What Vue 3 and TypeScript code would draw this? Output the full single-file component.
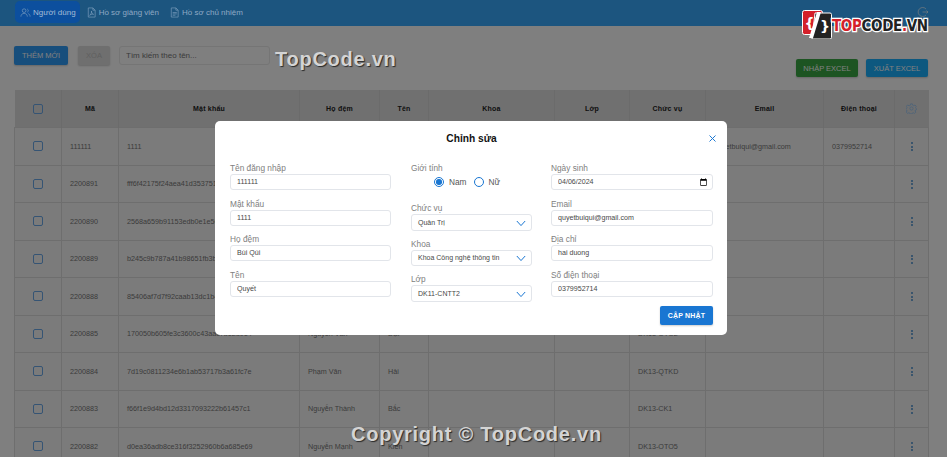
<script setup lang="ts">
interface Row {
  id: string
  pass: string
  last?: string
  first?: string
  cls?: string
  email?: string
  phone?: string
}

const rows: Row[] = [
  { id: '111111', pass: '1111', last: 'Bùi Qúi', first: 'Quyết', cls: 'DK11-CNTT2', email: 'quyetbuiqui@gmail.com', phone: '0379952714' },
  { id: '2200891', pass: 'fff6f42175f24aea41d3537519e1c0a2' },
  { id: '2200890', pass: '2568a659b91153edb0e1e5632ab9d0f4' },
  { id: '2200889', pass: 'b245c9b787a41b98651fb3b07dd1e6c3' },
  { id: '2200888', pass: '85406af7d7f92caab13dc1b4e08f7a15' },
  { id: '2200885', pass: '170050b605fe3c3600c43aac7be2d914', last: 'Nguyễn Văn', first: 'Đạt', cls: 'DK13-OTO2' },
  { id: '2200884', pass: '7d19c0811234e6b1ab53717b3a61fc7e', last: 'Phạm Văn', first: 'Hải', cls: 'DK13-QTKD' },
  { id: '2200883', pass: 'f66f1e9d4bd12d3317093222b61457c1', last: 'Nguyễn Thành', first: 'Bắc', cls: 'DK13-CK1' },
  { id: '2200882', pass: 'd0ea36adb8ce316f3252960b6a685e69', last: 'Nguyễn Mạnh', first: 'Kiên', cls: 'DK13-OTO5' }
]

const colWidths: number[] = [47, 57, 181, 80, 49, 126, 75, 76, 118, 71, 34]
</script>

<template>
  <div class="page">
    <header class="topbar">
      <nav class="tabs">
        <a class="tab active">
          <svg viewBox="0 0 24 24" class="tab-icon"><circle cx="9" cy="8" r="4" /><path d="M2 21c0-4.500 3-7 7-7s7 2.500 7 7M16 4.500a4 4 0 0 1 0 7M18 14.500c2.500.8 4 3 4 6.500" /></svg>
          Người dùng
        </a>
        <a class="tab">
          <svg viewBox="0 0 24 24" class="tab-icon"><path d="M5 2h10l5 5v15H5zM15 2v5h5" /><path d="M8 18c3-2 4.500-6 4-9-.5 3 2 6.500 4.500 7-3-.5-6 0-8.500 2z" /></svg>
          Hồ sơ giảng viên
        </a>
        <a class="tab">
          <svg viewBox="0 0 24 24" class="tab-icon"><path d="M5 2h10l5 5v15H5zM15 2v5h5M8 12h9M8 15h9M8 18h6" /></svg>
          Hồ sơ chủ nhiệm
        </a>
      </nav>
      <svg viewBox="0 0 24 24" class="logout"><path d="M18 6a9 9 0 1 0 0 12M11 12h11M19 9l3 3-3 3" /></svg>
    </header>

    <section class="toolbar">
      <div class="tool-left">
        <button class="btn primary">THÊM MỚI</button>
        <button class="btn disabled">XÓA</button>
        <input class="search" placeholder="Tìm kiếm theo tên..." />
      </div>
      <div class="tool-right">
        <button class="btn green">NHẬP EXCEL</button>
        <button class="btn teal">XUẤT EXCEL</button>
      </div>
    </section>

    <table class="grid">
      <colgroup>
        <col v-for="(w, i) in colWidths" :key="i" :style="{ width: w + 'px' }" />
      </colgroup>
      <thead>
        <tr>
          <th><span class="check"></span></th>
          <th>Mã</th>
          <th>Mật khẩu</th>
          <th>Họ đệm</th>
          <th>Tên</th>
          <th>Khoa</th>
          <th>Lớp</th>
          <th>Chức vụ</th>
          <th>Email</th>
          <th>Điện thoại</th>
          <th>
            <svg viewBox="0 0 24 24" class="gear"><circle cx="12" cy="12" r="3.500" /><path d="M10 2h4l.6 3 2.400 1 2.600-1.600 2.800 2.800L20.800 9.800l1 2.200 1.200.6v2l-2.200.6-1 2.200 1.600 2.600-2.800 2.800-2.600-1.600-2.400 1-.6 1.800h-4l-.6-1.800-2.400-1-2.600 1.600-2.800-2.800 1.600-2.600-1-2.200-2.200-.6v-2l2.200-.6 1-2.200-1.600-2.600 2.800-2.800L7 6l2.400-1z" /></svg>
          </th>
        </tr>
      </thead>
      <tbody>
        <tr v-for="row in rows" :key="row.id">
          <td class="center"><span class="check"></span></td>
          <td>{{ row.id }}</td>
          <td class="clip">{{ row.pass }}</td>
          <td>{{ row.last }}</td>
          <td>{{ row.first }}</td>
          <td></td>
          <td></td>
          <td>{{ row.cls }}</td>
          <td>{{ row.email }}</td>
          <td>{{ row.phone }}</td>
          <td class="center"><span class="dots"><i></i><i></i><i></i></span></td>
        </tr>
      </tbody>
    </table>

    <div class="overlay">
      <div class="modal">
        <div class="modal-head">
          <h2>Chỉnh sửa</h2>
          <svg viewBox="0 0 12 12" class="close"><path d="M2 2l8 8M10 2l-8 8" /></svg>
        </div>
        <form class="form" @submit.prevent>
          <div class="col col-a">
            <label class="field"><span>Tên đăng nhập</span><input value="111111" /></label>
            <label class="field"><span>Mật khẩu</span><input value="1111" /></label>
            <label class="field"><span>Họ đệm</span><input value="Bùi Qúi" /></label>
            <label class="field"><span>Tên</span><input value="Quyết" /></label>
          </div>
          <div class="col col-b">
            <div class="field gender">
              <span>Giới tính</span>
              <div class="radios">
                <span class="radio on"></span><em>Nam</em>
                <span class="radio"></span><em>Nữ</em>
              </div>
            </div>
            <div class="field">
              <span>Chức vụ</span>
              <div class="select">Quản Trị<svg viewBox="0 0 12 8"><path d="M1 1l5 5.500L11 1" /></svg></div>
            </div>
            <div class="field">
              <span>Khoa</span>
              <div class="select">Khoa Công nghệ thông tin<svg viewBox="0 0 12 8"><path d="M1 1l5 5.500L11 1" /></svg></div>
            </div>
            <div class="field">
              <span>Lớp</span>
              <div class="select">DK11-CNTT2<svg viewBox="0 0 12 8"><path d="M1 1l5 5.500L11 1" /></svg></div>
            </div>
          </div>
          <div class="col col-c">
            <label class="field"><span>Ngày sinh</span><input type="date" value="2024-04-06" /></label>
            <label class="field"><span>Email</span><input value="quyetbuiqui@gmail.com" /></label>
            <label class="field"><span>Địa chỉ</span><input value="hai duong" /></label>
            <label class="field"><span>Số điện thoại</span><input value="0379952714" /></label>
          </div>
        </form>
        <div class="modal-foot">
          <button class="btn save">CẬP NHẬT</button>
        </div>
      </div>
    </div>

    <div class="stamp stamp-top">TopCode.vn</div>
    <div class="stamp stamp-bottom">Copyright © TopCode.vn</div>
    <div class="brand">
      <svg viewBox="0 0 30 29" class="brand-icon">
        <rect x="0.500" y="0.500" width="20" height="24" rx="2" fill="#d4202a" stroke="#fff" />
        <path d="M13 3h15a1.500 1.500 0 0 1 1.500 1.500v23a1.500 1.500 0 0 1-1.500 1.500H10z" fill="#222" stroke="#fff" />
        <path d="M15 2h4L11 28H7z" fill="#fff" />
        <text x="2.500" y="18" class="brace">{</text>
        <text x="18" y="21" class="brace">}</text>
      </svg>
      <span class="brand-name"><b>TOP</b>CODE<b>.</b>VN</span>
    </div>
  </div>
</template>

<style scoped>
.page {
  position: relative;
  width: 947px;
  height: 457px;
  overflow: hidden;
  background: #fff;
  font-family: "Liberation Sans", Arial, sans-serif;
  color: #333;
}

.topbar {
  height: 26px;
  background: #38aaff;
  display: flex;
  align-items: flex-start;
  justify-content: space-between;
  padding: 1px 18px 0 15px;
  box-sizing: border-box;
}

/* sits over the backdrop, so colours here are the dimmed ones */
.tabs {
  position: relative;
  z-index: 1;
  display: flex;
  gap: 1px;
}

.tab {
  height: 22px;
  display: flex;
  align-items: center;
  gap: 2px;
  padding: 0 4px 0 5px;
  font-size: 8px;
  color: #8fa9c4;
  border-radius: 5px;
  white-space: nowrap;
}

.tab.active {
  background: #0c4f9e;
  color: #a3bcd6;
}

.tab-icon {
  width: 11px;
  height: 11px;
  fill: none;
  stroke: #86a5c4;
  stroke-width: 1.300;
}

.logout {
  width: 12px;
  height: 12px;
  margin-top: 5px;
  fill: none;
  stroke: #fff;
  stroke-width: 1.300;
}

.toolbar {
  display: flex;
  justify-content: space-between;
  padding: 20px 19px 13px 14px;
  height: 31px;
  box-sizing: content-box;
}

.tool-left {
  display: flex;
  gap: 10px;
  align-items: flex-start;
}

.tool-left .btn {
  height: 19px;
}

.search {
  width: 151px;
  height: 19px;
  margin-left: -1px;
  box-sizing: border-box;
  border: 1px solid #eaeaea;
  border-radius: 3px;
  padding: 0 6px;
  font: 8px "Liberation Sans", Arial, sans-serif;
  background: #fff;
  outline: none;
}

.search::placeholder {
  color: #777;
}

.tool-right {
  display: flex;
  gap: 8px;
  align-items: flex-end;
}

.btn {
  border: 0;
  border-radius: 2px;
  font: 7.500px "Liberation Sans", Arial, sans-serif;
  color: #fff;
  height: 18px;
  padding: 0;
  box-shadow: 0 1px 2px rgba(0, 0, 0, 0.2);
}

.primary {
  width: 54px;
  background: #2f9cf8;
}

.disabled {
  width: 32px;
  background: #dedede;
  color: #c0c0c0;
}

.green {
  width: 62px;
  background: #3aa844;
}

.teal {
  width: 62px;
  background: #1ab0ff;
}

.grid {
  margin-left: 14px;
  width: 914px;
  table-layout: fixed;
  border-collapse: collapse;
}

.grid th {
  height: 37px;
  padding: 0;
  background: #e0e0e0;
  font-size: 7px;
  font-weight: 700;
  letter-spacing: 0.2px;
  color: #222;
  border-right: 1px solid #d6d6d6;
  text-align: center;
}

.grid th:last-child {
  border-right: 0;
}

.grid td {
  height: 37.500px;
  box-sizing: border-box;
  padding: 0 0 0 8px;
  background: #f7f7f7;
  font-size: 7.200px;
  color: #777;
  border: 1px solid #dcdcdc;
  white-space: nowrap;
  overflow: hidden;
}

.grid td.center {
  padding: 0;
  text-align: center;
}

.check {
  display: inline-block;
  width: 10px;
  height: 10px;
  box-sizing: border-box;
  border: 1.600px solid #6aa8e8;
  border-radius: 2px;
  vertical-align: middle;
}

.gear {
  width: 11px;
  height: 11px;
  fill: none;
  stroke: #9cc8f4;
  stroke-width: 2;
  vertical-align: middle;
}

.dots {
  display: inline-flex;
  flex-direction: column;
  gap: 1.500px;
  vertical-align: middle;
}

.dots i {
  width: 2px;
  height: 2px;
  background: #4a90d0;
  border-radius: 50%;
}

.overlay {
  position: absolute;
  inset: 0;
  display: flex;
  align-items: flex-start;
  padding: 121px 0 0 215px;
  box-sizing: border-box;
  background: rgba(0, 0, 0, 0.5);
}

.modal {
  width: 512px;
  height: 214px;
  box-sizing: border-box;
  background: #fff;
  border-radius: 5px;
  padding: 0 14px 0 15px;
}

.modal-head {
  position: relative;
  height: 41px;
  display: flex;
  justify-content: center;
  padding-top: 12px;
  box-sizing: border-box;
}

.modal-head h2 {
  margin: 0;
  font-size: 10.200px;
  line-height: 12px;
  color: #111;
  font-weight: 700;
}

.close {
  position: absolute;
  right: -4px;
  top: 13px;
  width: 9px;
  height: 9px;
  fill: none;
  stroke: #1976d2;
  stroke-width: 1.300;
}

.form {
  display: flex;
  gap: 20px;
}

.col {
  display: flex;
  flex-direction: column;
  gap: 7.500px;
}

.col-a {
  width: 161px;
}

.col-b {
  width: 121px;
}

.col-c {
  width: 162px;
  margin-left: -1px;
}

.field {
  display: flex;
  flex-direction: column;
}

.field > span {
  font-size: 8.300px;
  line-height: 12px;
  color: #808080;
}

.field input,
.select {
  height: 16px;
  box-sizing: border-box;
  border: 1px solid #e2e5ea;
  border-radius: 3px;
  padding: 0 6px;
  font: 7.100px "Liberation Sans", Arial, sans-serif;
  color: #484848;
  background: #fff;
  outline: none;
  width: 100%;
}

.field input[type="date"] {
  padding-right: 4px;
}

.field input[type="date"]::-webkit-datetime-edit-text,
.field input[type="date"]::-webkit-datetime-edit-month-field,
.field input[type="date"]::-webkit-datetime-edit-day-field,
.field input[type="date"]::-webkit-datetime-edit-year-field {
  padding: 0;
}

.field input[type="date"]::-webkit-calendar-picker-indicator {
  width: 9px;
  height: 9px;
  margin: 0;
  padding: 0;
}

.gender {
  margin-bottom: 4.500px;
}

.radios {
  height: 16px;
  display: flex;
  align-items: center;
  padding-left: 23px;
}

.radio {
  width: 10px;
  height: 10px;
  box-sizing: border-box;
  border: 1.300px solid #1976d2;
  border-radius: 50%;
  position: relative;
}

.radio.on::after {
  content: "";
  position: absolute;
  inset: 1.300px;
  background: #1976d2;
  border-radius: 50%;
}

.radios em {
  font-style: normal;
  font-size: 8.300px;
  color: #555;
  margin: 0 7px 0 5px;
}

.select {
  position: relative;
  height: 16.500px;
  margin-bottom: -0.500px;
  display: flex;
  align-items: center;
  white-space: nowrap;
  font-size: 7px;
}

.select svg {
  position: absolute;
  right: 5px;
  top: 4.500px;
  width: 10px;
  height: 7px;
  fill: none;
  stroke: #1976d2;
  stroke-width: 1.200;
}

.modal-foot {
  display: flex;
  justify-content: flex-end;
  margin-top: 5px;
}

.save {
  width: 53px;
  height: 19px;
  background: #1976d2;
  font-weight: 700;
  font-size: 7px;
  letter-spacing: 0.2px;
}

.stamp {
  position: absolute;
  font-size: 20px;
  font-weight: 700;
  letter-spacing: 0.750px;
  color: #d4d4d4;
  text-shadow: 1px 1px 1px #2a2a2a;
  white-space: nowrap;
  line-height: 24px;
}

.stamp-top {
  left: 275px;
  top: 47px;
}

.stamp-bottom {
  left: 351px;
  top: 422px;
}

.brand {
  position: absolute;
  left: 802px;
  top: 10px;
  display: flex;
  align-items: center;
  gap: 0;
}

.brand-icon {
  width: 30px;
  height: 29px;
}

.brace {
  font: 700 14px "DejaVu Sans", sans-serif;
  fill: #fff;
}

.brand-name {
  font: 700 15px/16px "DejaVu Sans Condensed", "DejaVu Sans", sans-serif;
  letter-spacing: -0.350px;
  margin-top: 2px;
  color: #222;
  -webkit-text-stroke: 2.500px #fff;
  paint-order: stroke fill;
  white-space: nowrap;
}

.brand-name b {
  color: #d4202a;
}
</style>

<style>
html,
body {
  margin: 0;
  overflow: hidden;
  background: #fff;
}
</style>
